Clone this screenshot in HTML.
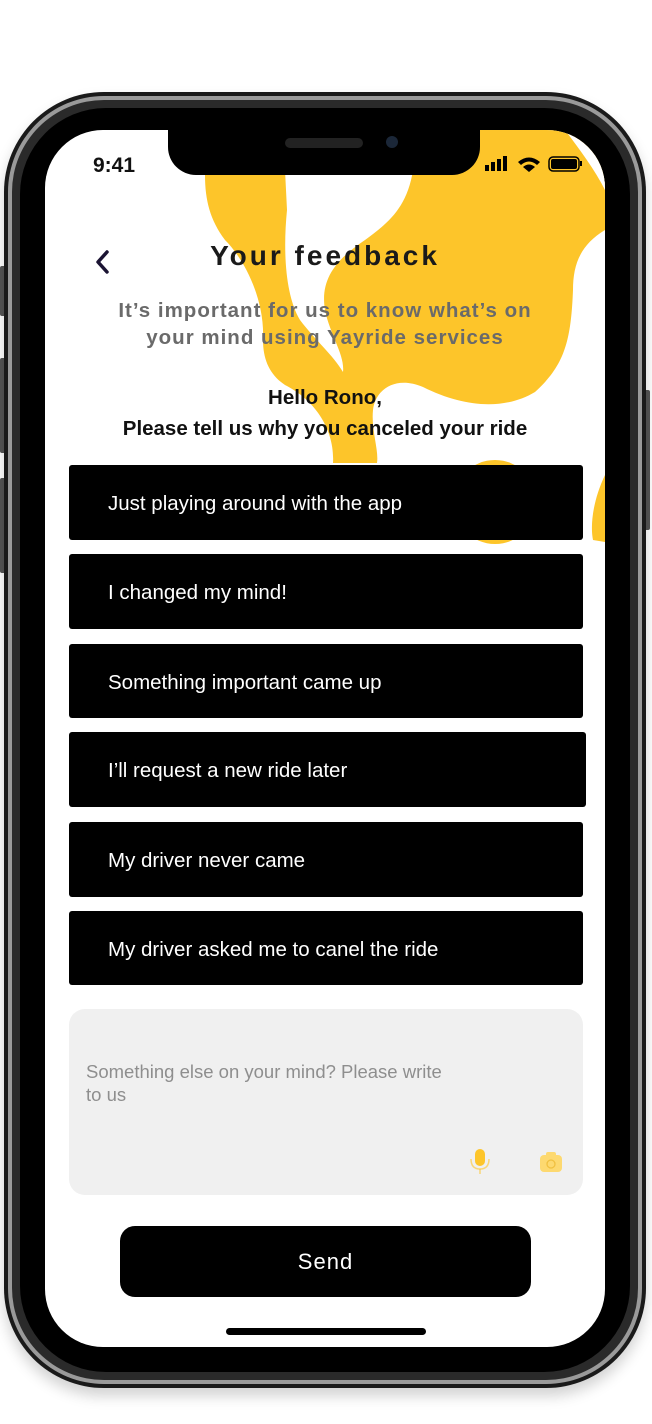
<!DOCTYPE html>
<html><head><meta charset="utf-8"><style>
*{margin:0;padding:0;box-sizing:border-box}
body{width:652px;height:1424px;background:#fff;position:relative;overflow:hidden;font-family:"Liberation Sans",sans-serif}
.abs{position:absolute}
.btn{position:absolute;left:69px;width:514px;height:75px;background:#000;border-radius:3px;color:#fff;font-size:20.5px;line-height:78px;padding-left:39px}
</style></head><body>
<!-- phone body -->
<div class="abs" style="left:0;top:266px;width:8px;height:50px;background:#555;border-radius:2px"></div>
<div class="abs" style="left:0;top:358px;width:8px;height:95px;background:#555;border-radius:2px"></div>
<div class="abs" style="left:0;top:478px;width:8px;height:95px;background:#555;border-radius:2px"></div>
<div class="abs" style="left:642px;top:390px;width:8px;height:140px;background:#555;border-radius:2px"></div>
<div class="abs" style="left:4px;top:92px;width:642px;height:1296px;border-radius:100px;background:#1a1a1a;box-shadow:0 8px 14px rgba(0,0,0,.18)"></div>
<div class="abs" style="left:8px;top:96px;width:634px;height:1288px;border-radius:96px;background:#9a9a9a"></div>
<div class="abs" style="left:12px;top:100px;width:626px;height:1280px;border-radius:92px;background:#2a2a2a"></div>
<div class="abs" style="left:20px;top:108px;width:610px;height:1264px;border-radius:86px;background:#000"></div>
<!-- screen -->
<div class="abs" style="left:45px;top:130px;width:560px;height:1217px;border-radius:58px;background:#fff;overflow:hidden">
<svg width="560" height="1217" style="position:absolute;left:0;top:0">
<path fill="#FDC52A" d="M160 0 L560 0 L560 100 C535 115 528 135 528 160 C526 210 520 235 490 262 C460 280 420 278 378 257 C350 245 330 260 328 280 C326 300 334 320 332 333 L288 333 C290 300 270 270 240 255 C225 245 218 230 218 210 C220 170 200 130 180 110 C165 90 160 70 160 45 Z"/>
<path fill="#fff" d="M240 40 L368 40 C362 80 340 95 320 110 C290 130 275 150 280 180 C285 205 300 225 298 242 C288 225 270 210 255 190 C240 165 238 120 242 80 Z"/>
<path fill="#fff" d="M520 0 C535 20 550 40 560 60 L560 0 Z"/>
<circle cx="450" cy="372" r="42" fill="#FDC52A"/>
<path fill="#FDC52A" d="M560 345 C548 370 545 395 548 410 L560 412 Z"/>
</svg>
<div class="abs" style="left:123px;top:0;width:312px;height:45px;background:#000;border-radius:0 0 28px 28px"></div>
<div class="abs" style="left:240px;top:8px;width:78px;height:10px;background:#222;border-radius:5px"></div>
<div class="abs" style="left:341px;top:6px;width:12px;height:12px;background:#1b2738;border-radius:50%"></div>
<div class="abs" style="left:48px;top:24px;font-size:21px;font-weight:bold;color:#111">9:41</div>
<svg class="abs" style="left:440px;top:25px" width="100" height="20">
<rect x="0" y="10" width="4" height="6" fill="#000"/><rect x="6" y="7" width="4" height="9" fill="#000"/><rect x="12" y="4" width="4" height="12" fill="#000"/><rect x="18" y="1" width="4" height="15" fill="#000"/>
<path d="M33 7 Q44 -2 55 7 L52 10 Q44 3 36 10 Z M38 12 Q44 7 50 12 L44 17 Z" fill="#000"/>
<rect x="64" y="2" width="30" height="14" rx="4" fill="none" stroke="#000" stroke-width="1.5"/><rect x="66" y="4" width="26" height="10" rx="2" fill="#000"/><rect x="95" y="6" width="2" height="5" fill="#000"/>
</svg>
<svg class="abs" style="left:48px;top:118px" width="20" height="30"><path d="M14 4 L5 14 L14 24" stroke="#1b1433" stroke-width="3.5" fill="none" stroke-linecap="round" stroke-linejoin="round"/></svg>
<div class="abs" style="left:0;top:110px;width:560px;text-align:center;font-size:28px;font-weight:bold;letter-spacing:3px;color:#1a1a1a">Your feedback</div>
<div class="abs" style="left:0;top:167px;width:560px;text-align:center;font-size:20.5px;font-weight:bold;letter-spacing:1px;line-height:27px;color:#6a6a6a">It’s important for us to know what’s on<br>your mind using Yayride services</div>
<div class="abs" style="left:0;top:252px;width:560px;text-align:center;font-size:20.5px;font-weight:bold;line-height:31px;color:#111">Hello Rono,<br>Please tell us why you canceled your ride</div>
</div>
<div class="btn" style="top:465px">Just playing around with the app</div>
<div class="btn" style="top:554px">I changed my mind!</div>
<div class="btn" style="top:644px;height:74px">Something important came up</div>
<div class="btn" style="top:732px;width:517px">I’ll request a new ride later</div>
<div class="btn" style="top:822px">My driver never came</div>
<div class="btn" style="top:911px;height:74px">My driver asked me to canel the ride</div>
<div class="abs" style="left:69px;top:1009px;width:514px;height:186px;background:#f0f0f0;border-radius:16px"></div>
<div class="abs" style="left:86px;top:1060px;font-size:18.5px;line-height:23px;color:#8e8e8e">Something else on your mind? Please write<br>to us</div>
<svg class="abs" style="left:466px;top:1146px" width="28" height="30"><rect x="9" y="3" width="10" height="17" rx="5" fill="#FDC52A"/><path d="M5 13 Q5 23 14 23 Q23 23 23 13" stroke="#FDC52A" stroke-width="1.5" fill="none" opacity=".6"/><path d="M14 23 V28" stroke="#FDC52A" stroke-width="1.5" opacity=".6"/></svg>
<svg class="abs" style="left:538px;top:1150px" width="26" height="24"><rect x="2" y="5" width="22" height="17" rx="4" fill="#FDD970"/><rect x="8" y="2" width="10" height="5" rx="2" fill="#FDD970"/><circle cx="13" cy="14" r="4" fill="none" stroke="#f0c040" stroke-width="1.3"/></svg>
<div class="abs" style="left:120px;top:1226px;width:411px;height:71px;background:#000;border-radius:15px;color:#fff;font-size:22px;letter-spacing:1px;text-align:center;line-height:71px">Send</div>
<div class="abs" style="left:226px;top:1328px;width:200px;height:7px;background:#000;border-radius:4px"></div>
</body></html>
